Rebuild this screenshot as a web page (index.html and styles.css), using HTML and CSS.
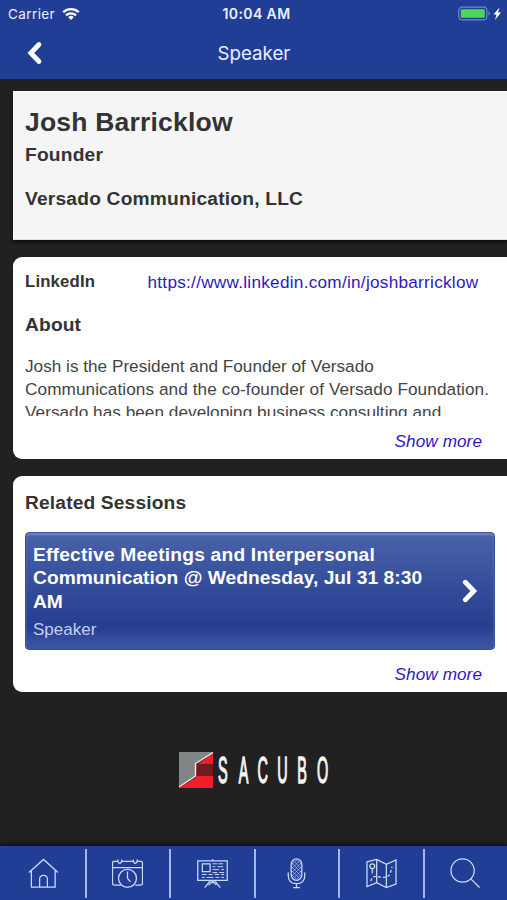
FILE: index.html
```html
<!DOCTYPE html>
<html lang="en">
<head>
<meta charset="utf-8">
<title>Speaker</title>
<link rel="stylesheet" href="styles.css">
</head>
<body>
<div class="app">
  <header class="header">
    <div class="status">
      <div class="carrier"><span>Carrier</span>
        <svg width="18" height="14" viewBox="0 0 18 14" fill="none" stroke="#fff" stroke-width="2.3"><path d="M1.2 5.2a11.2 11.2 0 0 1 15.6 0M4 8.3a7.2 7.2 0 0 1 10 0"/><path d="M9 13 6.2 10.2a4 4 0 0 1 5.6 0z" fill="#fff" stroke="none"/></svg>
      </div>
      <div class="time">10:04 AM</div>
      <div class="power">
        <svg width="44" height="16" viewBox="0 0 44 16"><rect x=".8" y="1.2" width="28" height="12.6" rx="3.2" fill="none" stroke="#7189c0" stroke-width="1.2"/><rect x="2.8" y="3.2" width="24" height="8.6" rx="1.2" fill="#4cd65b"/><path d="M30.500 5.500v4q1.500-.6 1.500-2t-1.500-2" fill="#7189c0"/><path d="M41.500 1.500 35.500 8.500h3l-1.500 5.500L43 6.500h-3z" fill="#fff"/></svg>
      </div>
    </div>
    <div class="titlebar">
      <svg class="back" width="16" height="24" viewBox="0 0 16 24" fill="none" stroke="#fff" stroke-width="4.800" stroke-linecap="round"><path d="M12 3.500 3.800 12l8.200 8.500"/></svg>
      <h1 class="title">Speaker</h1>
    </div>
  </header>
  <main class="main">
    <section class="profile">
      <h2 class="name">Josh Barricklow</h2>
      <p class="role">Founder</p>
      <p class="company">Versado Communication, LLC</p>
    </section>
    <section class="card about">
      <div class="link-row"><span class="label">LinkedIn</span><a class="url">https://www.linkedin.com/in/joshbarricklow</a></div>
      <h3 class="heading about-heading">About</h3>
      <div class="bio"><span class="l1">Josh is the President and Founder of Versado</span><span class="l2">Communications and the co-founder of Versado Foundation.</span><span class="l3">Versado has been developing business consulting and</span></div>
      <a class="more">Show more</a>
    </section>
    <section class="card sessions">
      <h3 class="heading sessions-heading">Related Sessions</h3>
      <div class="session">
        <div class="session-text">
          <div class="session-title"><span class="s1">Effective Meetings and Interpersonal</span><span class="s2">Communication @ Wednesday, Jul 31 8:30</span><span>AM</span></div>
          <div class="session-role">Speaker</div>
        </div>
        <svg width="16" height="24" viewBox="0 0 16 24" fill="none" stroke="#fff" stroke-width="4.800" stroke-linecap="round"><path d="M3.300 3.200 11.800 12l-8.500 8.800"/></svg>
      </div>
      <a class="more">Show more</a>
    </section>
    <div class="logo">
      <svg width="152" height="38" viewBox="178 751 152 38">
        <path fill="#808586" d="M179 752h34v1L195 764v13l-16 10z"/>
        <path fill="#ef1e2b" d="M213 753v35h-34l17-11v-12z"/>
        <path fill="#6e1c22" d="M197 764h16v12h-17z"/>
        <path d="M179 787l16.500-11v-12.500L213 752.500" fill="none" stroke="#efefef" stroke-width="1.300"/>
        <g transform="scale(.39 1)"><text class="wordmark" y="783" x="559 612 660 711 762 813">SACUBO</text></g>
      </svg>
    </div>
  </main>
  <nav class="nav">
    <a class="tab"><svg viewBox="0 0 32 32"><path d="M1 15 16 1.500 31 15M3.500 13v17H28V13M12 30V22q0-4 4-4t4 4v8"/></svg></a>
    <a class="tab"><svg viewBox="0 0 32 32"><path d="M9 28H2.500Q.5 28 .5 26V5.500q0-2 2-2H6M10 3.500h12M26 3.500h3.500q2 0 2 2V26q0 2-2 2H24M.5 10h31M6 1.500v2q2 4 4 0v-2M22 1.500v2q2 4 4 0v-2"/><circle cx="16" cy="21" r="9.300"/><path d="M16 14v7l3 3.500"/></svg></a>
    <a class="tab"><svg viewBox="0 0 32 32"><path d="M.8 3h30.400v20H.8zM16 1v2M16 23v3M14 23 8 30.500M18 23l6 7.500M12 28l4-4 4 4M5.500 6h8v8h-8z"/><path stroke-width="1" d="M16 6h5m1 0h5M16 9h3m2 0h6M16 12h7m2 0h3M16 15h5m2 0h5M5 17h5m2 0h4m2 0h5m2 0h3M5 20h3m2 0h7m2 0h4m2 0h3"/></svg></a>
    <a class="tab"><svg viewBox="0 0 32 32"><rect x="10.500" y="1" width="11" height="22" rx="5.500"/><path d="M7.500 15v3q0 8.500 8.500 8.500t8.500-8.500v-3M16 26.500V30M12.500 30.500h7"/><path stroke-width=".6" d="m11 7 5-5m-5 9 8-8m-8 12 10-10m-10 14 10-10m-8 12 8-8m-5 9 5-5M21 7l-5-5m5 9-8-8m8 12L11 5m10 14L11 9m8 12-8-8m5 9-5-5"/></svg></a>
    <a class="tab"><svg viewBox="0 0 32 32"><path d="m1 4 10-2.500 10 5L31 2v25l-10 3.500-10-5L1 29.500zM11 1.500v24M21 6.500v24"/><circle cx="6.500" cy="8.500" r="2.500"/><path d="M6.500 11v5"/><path stroke-dasharray="3 2" d="M5 24q1-6 7-5 10 3 13-3l2-7"/></svg></a>
    <a class="tab"><svg viewBox="0 0 32 32"><circle cx="13" cy="13" r="12"/><path d="m21.500 21.500 9 9"/></svg></a>
  </nav>
</div>
</body>
</html>
```
FILE: styles.css
```css
* { box-sizing: border-box; }
body, h1, h2, h3, p { margin: 0; }
body { background: #212121; color: #333; font-family: "Liberation Sans", Arial, sans-serif; overflow: hidden; }
svg { display: block; flex: none; }
.app { width: 507px; height: 900px; display: flex; flex-direction: column; }
.header { height: 79px; background: #213e97; color: #eaf0ff; font-family: Inter, sans-serif; }
.status { height: 27px; padding: 0 5px 0 8px; display: grid; grid-template-columns: 1fr auto 1fr; align-items: center; font-size: 13.500px; }
.carrier { display: flex; align-items: center; gap: 7px; }
.carrier span { letter-spacing: .4px; }
.time { font-weight: 600; font-size: 14px; letter-spacing: .4px; padding-left: 3px; }
.power { display: flex; justify-content: flex-end; }
.titlebar { height: 52px; display: grid; grid-template-columns: 1fr auto 1fr; align-items: center; }
.back { margin-left: 27px; }
.title { font-size: 18.700px; font-weight: 400; padding-left: 1px; }
.main { flex: 1; padding: 12px 0 0 13px; }
.profile { height: 149px; margin-bottom: 17px; padding: 15px 11px; background: #f5f5f5; border-top: 1px solid #fff; border-left: 1px solid #fff; border-bottom: 1px solid #ddd; box-shadow: 0 2px 3px #0c0c0c; white-space: nowrap; }
.name { font-size: 26.500px; line-height: 31px; letter-spacing: .2px; }
.role, .company { font-size: 19.200px; line-height: 22px; font-weight: 700; letter-spacing: .2px; }
.role { margin-top: 6px; }
.company { margin-top: 22px; }
.card { background: #fff; border-radius: 9px 0 0 9px; padding: 0 12px; white-space: nowrap; display: flex; flex-direction: column; }
.about { height: 202px; margin-bottom: 17px; padding-top: 13px; }
.link-row { display: flex; align-items: center; height: 23px; }
.label { width: 122.500px; font-size: 16.800px; font-weight: 700; letter-spacing: .15px; }
.url { font-size: 17.200px; padding-top: 2px; letter-spacing: .26px; }
.url, .more { color: #2e18c1; }
.heading { font-size: 19.200px; line-height: 23px; letter-spacing: .15px; }
.about-heading { margin-top: 20px; }
.bio { height: 61px; margin-top: 19px; overflow: hidden; font-size: 17.200px; line-height: 23.200px; color: #444; }
.bio span, .session-title span { display: block; width: max-content; }
.l2 { letter-spacing: .08px; }
.l3 { letter-spacing: .03px; }
.more { align-self: flex-end; margin-right: 13px; font-size: 17.200px; line-height: 20px; font-style: italic; letter-spacing: .05px; }
.about .more { margin-top: 15px; }
.sessions { height: 216px; padding-top: 15px; }
.session { height: 118px; width: 470px; margin: 18px 0 14px; padding: 0 16px 0 7px; display: flex; justify-content: space-between; align-items: center; border: 1px solid #344f9b; border-radius: 4px; background: linear-gradient(#4962a9, #263f90 78%, #263f90 82%, #3f58a4); box-shadow: inset 0 2px 2px #6f86bd; color: #fff; }
.session-text { align-self: flex-start; padding-top: 10px; }
.session-title { font-size: 19.200px; line-height: 23.300px; font-weight: 700; }
.s1 { letter-spacing: .2px; }
.s2 { letter-spacing: .03px; }
.session-role { margin-top: 7px; font-size: 17px; line-height: 20px; color: #c3cff0; }
.logo { margin: 59px 0 0 165px; }
.wordmark { font-size: 37px; fill: #f5f5f5; stroke: #f5f5f5; stroke-width: 1.100px; vector-effect: non-scaling-stroke; }
.nav { height: 54px; background: #213e97; display: grid; grid-template-columns: repeat(6, 1fr); box-shadow: 0 -2px 3px #111; padding: 3px 0 2px; }
.tab { display: flex; align-items: center; justify-content: center; border-left: 2px solid #a4b8ed; }
.tab:first-child { border-color: transparent; }
.tab svg { width: 31px; height: 31px; fill: none; stroke: #ccdafa; stroke-width: 1.300; }
```
